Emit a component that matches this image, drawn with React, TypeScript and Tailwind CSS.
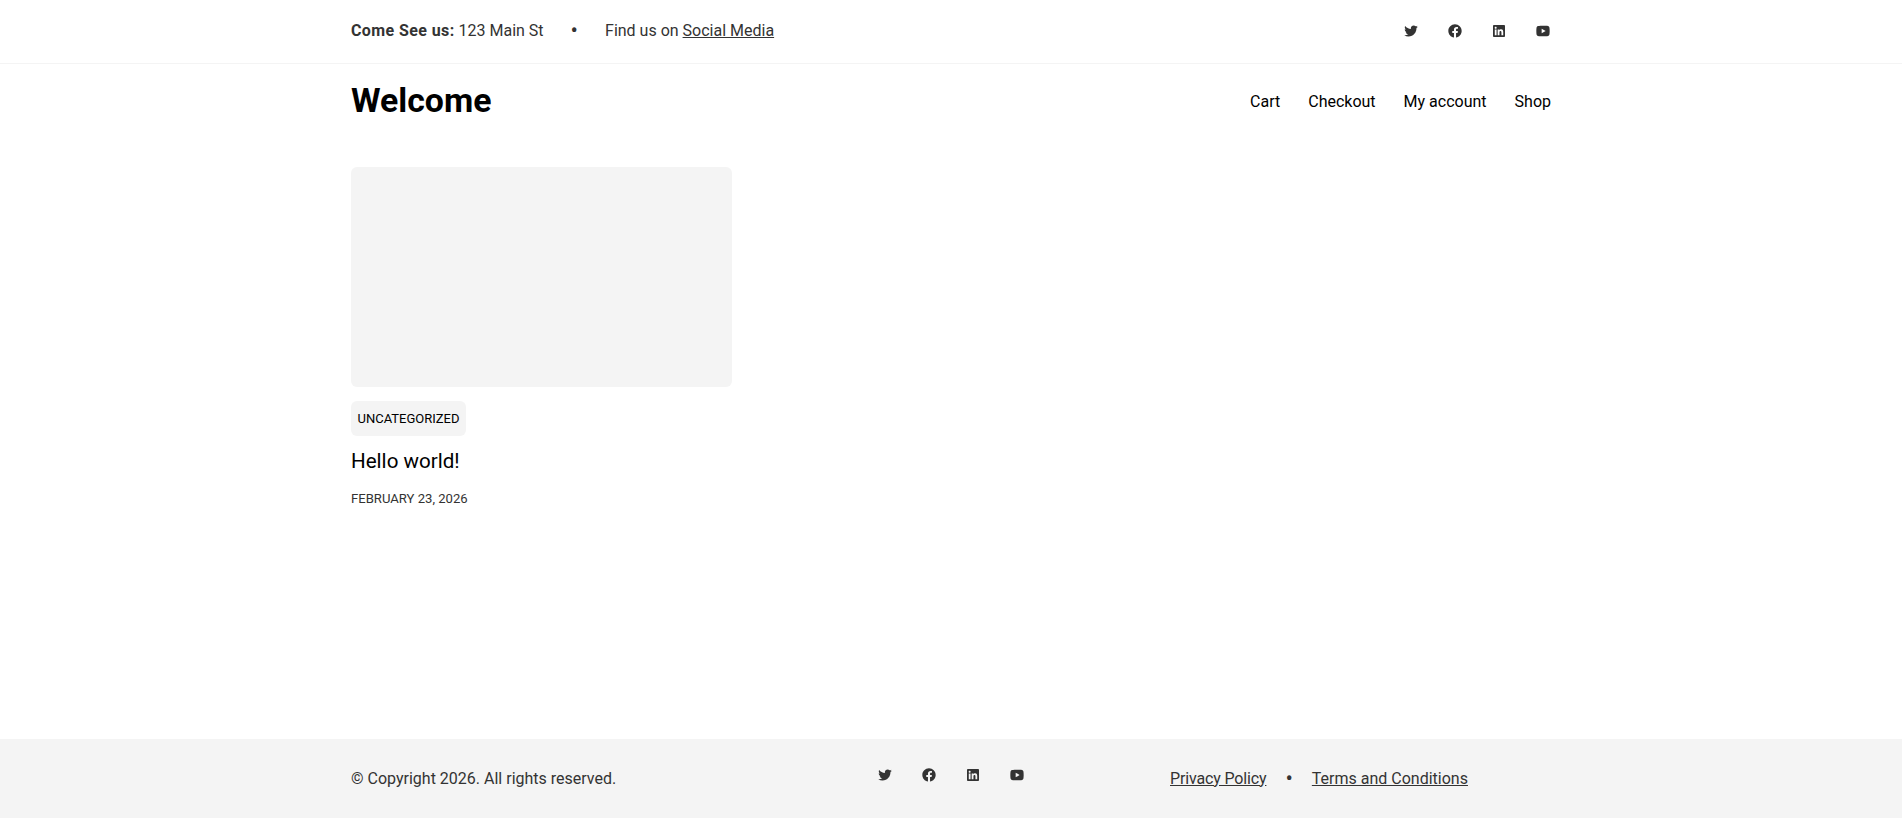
import { RiFacebookCircleFill, RiLinkedinBoxFill, RiTwitterFill, RiYoutubeFill } from 'react-icons/ri';

const SocialIcons = () => {
    const icons = [RiTwitterFill, RiFacebookCircleFill, RiLinkedinBoxFill, RiYoutubeFill];
    return (
        <div className="flex items-center gap-7 text-[#333333]">
            {icons.map((Icon, i) => (
                <a key={i} href="#" className="block">
                    <Icon className="block h-4 w-4" />
                </a>
            ))}
        </div>
    );
};

export default function App() {
    return (
        <div className="flex min-h-[818px] flex-col bg-white font-['Roboto',sans-serif] text-base text-[#333333]">
            {/* top bar */}
            <div className="h-16 border-b border-[#f4f4f4]">
                <div className="mx-auto flex h-full w-[1200px] items-center justify-between pb-0.5">
                    <div className="flex items-center">
                        <span>
                            <strong className="font-bold tracking-[0.4px]">Come See us:</strong> 123 Main St
                        </span>
                        <span className="mx-[27px] text-[22px] leading-none">•</span>
                        <span>
                            Find us on{' '}
                            <a href="#" className="underline">
                                Social Media
                            </a>
                        </span>
                    </div>
                    <SocialIcons />
                </div>
            </div>

            {/* header */}
            <header className="mx-auto flex h-[74px] w-[1200px] items-center justify-between text-black">
                <h1 className="text-[33.8px] leading-none font-bold">Welcome</h1>
                <nav className="flex gap-7 pt-0.5">
                    <a href="#">Cart</a>
                    <a href="#">Checkout</a>
                    <a href="#">My account</a>
                    <a href="#">Shop</a>
                </nav>
            </header>

            {/* posts */}
            <main className="mx-auto w-[1200px] flex-1 pt-[29px]">
                <article className="w-[381px]">
                    <div className="h-[220px] rounded-md bg-[#f4f4f4]" />
                    <a href="#" className="mt-3.5 inline-block rounded-md bg-[#f4f4f4] px-[6.5px] py-[9px] text-[13px] leading-[17px] text-black uppercase">
                        Uncategorized
                    </a>
                    <h2 className="mt-[11px] text-[20.6px] leading-7 font-normal text-black">Hello world!</h2>
                    <p className="mt-3.5 text-[13.1px] leading-5 uppercase">February 23, 2026</p>
                </article>
            </main>

            {/* footer */}
            <footer className="h-[79px] bg-[#f4f4f4]">
                <div className="mx-auto grid h-full w-[1200px] grid-cols-[1fr_auto_1fr] items-center">
                    <p>© Copyright 2026. All rights reserved.</p>
                    <div className="-mt-2">
                        <SocialIcons />
                    </div>
                    <div className="flex items-center pl-[145px]">
                        <a href="#" className="tracking-[-0.15px] underline">
                            Privacy Policy
                        </a>
                        <span className="mx-[19px] text-[22px] leading-none">•</span>
                        <a href="#" className="underline">
                            Terms and Conditions
                        </a>
                    </div>
                </div>
            </footer>
        </div>
    );
}
